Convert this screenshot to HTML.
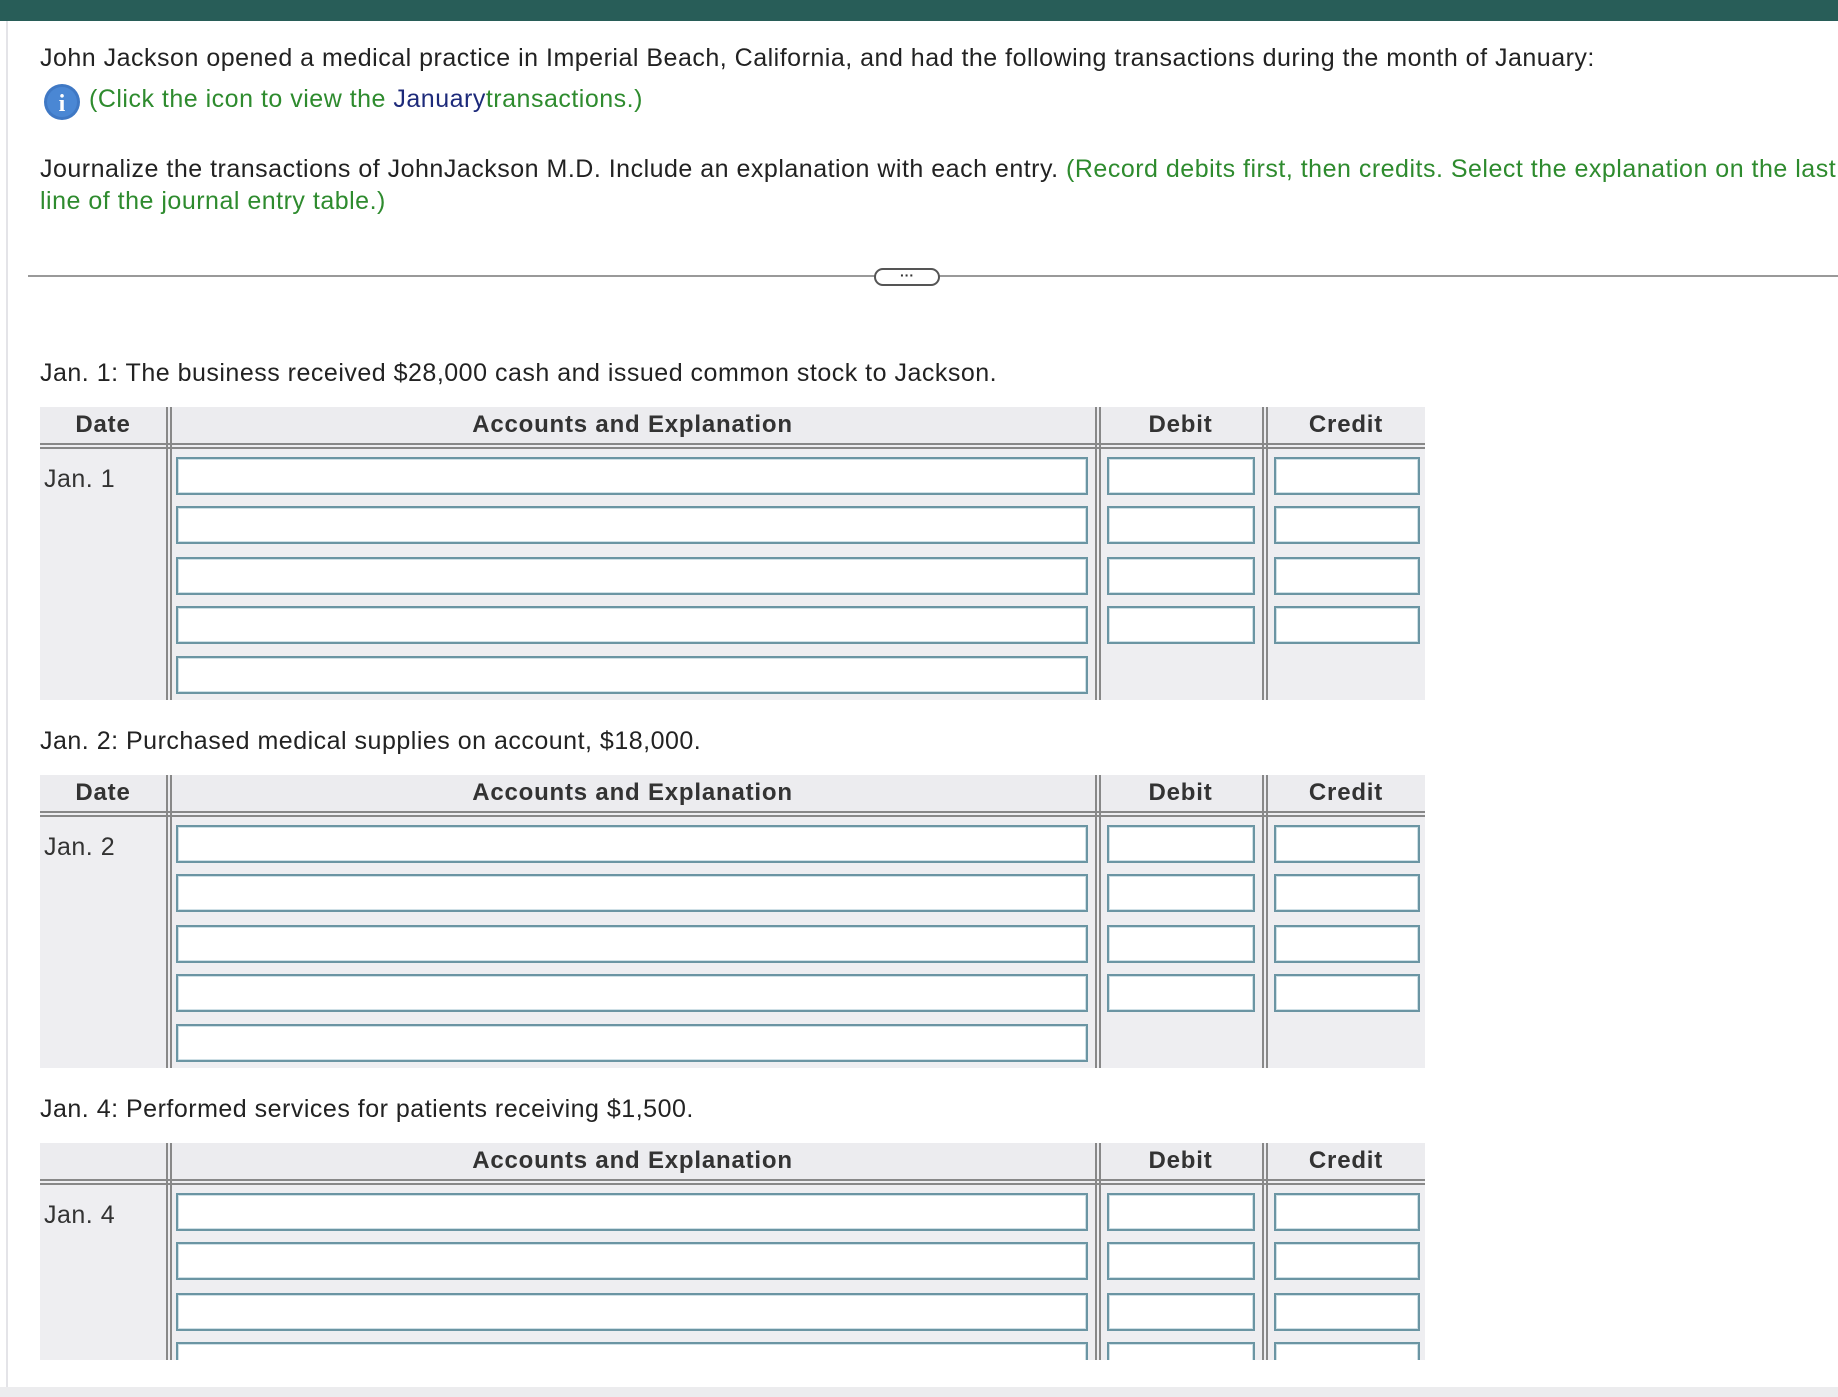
<!DOCTYPE html>
<html><head><meta charset="utf-8"><style>
body{margin:0;width:1838px;height:1397px;background:#fff;position:relative;overflow:hidden;font-family:"Liberation Sans",Arial,sans-serif;color:#222;}
.a{position:absolute;white-space:nowrap;}
.top{left:0;top:0;width:1838px;height:21px;background:#285d58;}
.vl{left:6px;top:21px;width:2px;height:1366px;background:#e4e4e8;}
.bot{left:0;top:1387px;width:1838px;height:10px;background:#ececee;}
.t{font-size:25px;letter-spacing:0.5px;}
.g{color:#2e8b2e;}
.tbl{position:absolute;left:40px;width:1385px;background:#eeeef1;overflow:hidden;}
.hd{position:absolute;left:0;top:0;width:100%;height:38px;background:#ececef;}
.hl{position:absolute;left:0;top:36px;width:100%;border-top:2px solid #888;border-bottom:2px solid #888;height:2px;}
.vd{position:absolute;top:0;bottom:0;width:2px;border-left:2px solid #888;border-right:2px solid #888;}
.ht{position:absolute;top:4px;font-size:24px;letter-spacing:0.8px;font-weight:bold;color:#333;text-align:center;}
.in{position:absolute;height:34px;background:#fff;border:2px solid #6b95a3;box-shadow:inset 0 0 0 1px #cfe0e6;}
.dt{position:absolute;left:4px;top:58px;font-size:25px;letter-spacing:0.5px;color:#333;}
</style></head><body>
<div class="a top"></div><div class="a vl"></div><div class="a bot"></div>
<div class="a t" style="left:40px;top:44px">John Jackson opened a medical practice in Imperial Beach, California, and had the following transactions during the month of January:</div>
<svg class="a" style="left:43px;top:83px" width="38" height="38"><circle cx="19" cy="19" r="18" fill="#3f78c4"/><circle cx="19" cy="19" r="15" fill="#4a87d4"/><text x="19" y="28" font-family="Liberation Serif" font-weight="bold" font-size="24" fill="#fff" text-anchor="middle">i</text></svg>
<div class="a t g" style="left:89px;top:85px">(Click the icon to view the <span style="color:#1d2a7a">January</span>transactions.)</div>
<div class="a t" style="left:40px;top:155px">Journalize the transactions of JohnJackson M.D. Include an explanation with each entry. <span class="g">(Record debits first, then credits. Select the explanation on the last</span></div>
<div class="a t g" style="left:40px;top:187px">line of the journal entry table.)</div>
<div class="a" style="left:28px;top:275px;width:1810px;height:2px;background:#999"></div>
<div class="a" style="left:874px;top:268px;width:62px;height:14px;border:2px solid #555;border-radius:9px;background:#fff;font-size:14px;line-height:10px;text-align:center;color:#333;font-weight:bold">···</div>

<div class="a t" style="left:40px;top:359px">Jan. 1: The business received $28,000 cash and issued common stock to Jackson.</div>
<div class="tbl" style="top:407px;height:293px">
<div class="hd"></div><div class="hl"></div>
<div class="vd" style="left:126px"></div><div class="vd" style="left:1055px"></div><div class="vd" style="left:1222px"></div>
<div class="ht" style="left:0;width:126px">Date</div><div class="ht" style="left:130px;width:925px">Accounts and Explanation</div><div class="ht" style="left:1059px;width:163px">Debit</div><div class="ht" style="left:1226px;width:160px">Credit</div>
<div class="dt">Jan. 1</div>
<div class="in" style="left:136px;top:50px;width:908px"></div><div class="in" style="left:1067px;top:50px;width:144px"></div><div class="in" style="left:1234px;top:50px;width:142px"></div>
<div class="in" style="left:136px;top:99px;width:908px"></div><div class="in" style="left:1067px;top:99px;width:144px"></div><div class="in" style="left:1234px;top:99px;width:142px"></div>
<div class="in" style="left:136px;top:150px;width:908px"></div><div class="in" style="left:1067px;top:150px;width:144px"></div><div class="in" style="left:1234px;top:150px;width:142px"></div>
<div class="in" style="left:136px;top:199px;width:908px"></div><div class="in" style="left:1067px;top:199px;width:144px"></div><div class="in" style="left:1234px;top:199px;width:142px"></div>
<div class="in" style="left:136px;top:249px;width:908px"></div>
</div>

<div class="a t" style="left:40px;top:727px">Jan. 2: Purchased medical supplies on account, $18,000.</div>
<div class="tbl" style="top:775px;height:293px">
<div class="hd"></div><div class="hl"></div>
<div class="vd" style="left:126px"></div><div class="vd" style="left:1055px"></div><div class="vd" style="left:1222px"></div>
<div class="ht" style="left:0;width:126px">Date</div><div class="ht" style="left:130px;width:925px">Accounts and Explanation</div><div class="ht" style="left:1059px;width:163px">Debit</div><div class="ht" style="left:1226px;width:160px">Credit</div>
<div class="dt">Jan. 2</div>
<div class="in" style="left:136px;top:50px;width:908px"></div><div class="in" style="left:1067px;top:50px;width:144px"></div><div class="in" style="left:1234px;top:50px;width:142px"></div>
<div class="in" style="left:136px;top:99px;width:908px"></div><div class="in" style="left:1067px;top:99px;width:144px"></div><div class="in" style="left:1234px;top:99px;width:142px"></div>
<div class="in" style="left:136px;top:150px;width:908px"></div><div class="in" style="left:1067px;top:150px;width:144px"></div><div class="in" style="left:1234px;top:150px;width:142px"></div>
<div class="in" style="left:136px;top:199px;width:908px"></div><div class="in" style="left:1067px;top:199px;width:144px"></div><div class="in" style="left:1234px;top:199px;width:142px"></div>
<div class="in" style="left:136px;top:249px;width:908px"></div>
</div>

<div class="a t" style="left:40px;top:1095px">Jan. 4: Performed services for patients receiving $1,500.</div>
<div class="tbl" style="top:1143px;height:217px">
<div class="hd"></div><div class="hl"></div>
<div class="vd" style="left:126px"></div><div class="vd" style="left:1055px"></div><div class="vd" style="left:1222px"></div>
<div class="ht" style="left:130px;width:925px">Accounts and Explanation</div><div class="ht" style="left:1059px;width:163px">Debit</div><div class="ht" style="left:1226px;width:160px">Credit</div>
<div class="dt">Jan. 4</div>
<div class="in" style="left:136px;top:50px;width:908px"></div><div class="in" style="left:1067px;top:50px;width:144px"></div><div class="in" style="left:1234px;top:50px;width:142px"></div>
<div class="in" style="left:136px;top:99px;width:908px"></div><div class="in" style="left:1067px;top:99px;width:144px"></div><div class="in" style="left:1234px;top:99px;width:142px"></div>
<div class="in" style="left:136px;top:150px;width:908px"></div><div class="in" style="left:1067px;top:150px;width:144px"></div><div class="in" style="left:1234px;top:150px;width:142px"></div>
<div class="in" style="left:136px;top:199px;width:908px"></div><div class="in" style="left:1067px;top:199px;width:144px"></div><div class="in" style="left:1234px;top:199px;width:142px"></div>
</div>
</body></html>
